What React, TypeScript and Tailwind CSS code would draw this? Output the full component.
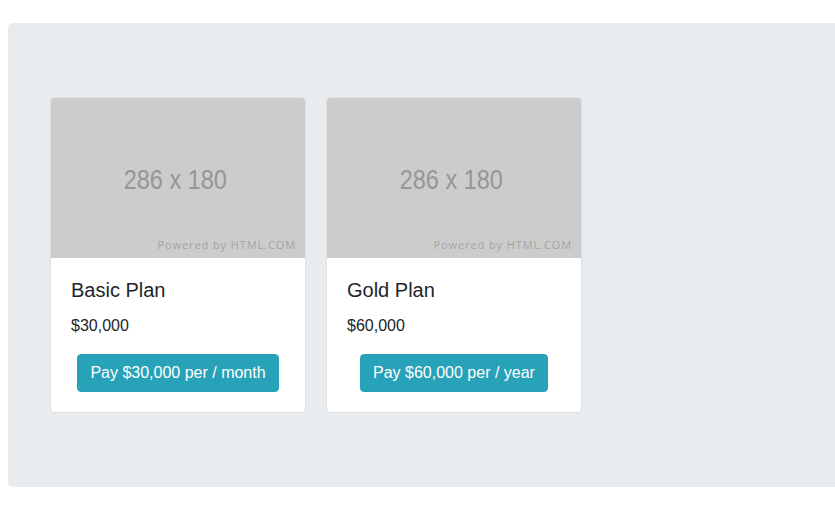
import type { ReactElement } from 'react';

type Plan = { name: string; price: string; cta: string };

const plans: Plan[] = [
  { name: 'Basic Plan', price: '$30,000', cta: 'Pay $30,000 per / month' },
  { name: 'Gold Plan', price: '$60,000', cta: 'Pay $60,000 per / year' },
];

function Placeholder(): ReactElement {
  return (
    <div className="relative flex h-[160px] items-center justify-center rounded-t-[3px] bg-[#cccccc]">
      <span className="translate-x-[-3px] translate-y-[2px] font-['Liberation_Sans',Arial,sans-serif] text-[27px] leading-none text-[#969696] [transform:scaleX(0.87)]">
        286 x 180
      </span>
      <span className="absolute right-[9px] bottom-[8px] font-['Open_Sans',sans-serif] text-[11px] leading-none tracking-[0.9px] text-[#a4a4a4]">
        Powered by HTML.COM
      </span>
    </div>
  );
}

function PlanCard({ plan }: { plan: Plan }): ReactElement {
  return (
    <div className="flex w-[256px] flex-col rounded-[4px] border border-[#dfdfdf] bg-white">
      <Placeholder />
      <div className="p-5">
        <h5 className="mb-3 text-[20px] leading-[24px] font-normal">{plan.name}</h5>
        <p className="mb-4 text-[16px] leading-[24px]">{plan.price}</p>
        <div className="text-center">
          <button className="rounded-[4px] border border-[#28a2b8] bg-[#28a2b8] px-3 py-[6px] text-[16px] leading-[24px] text-white">
            {plan.cta}
          </button>
        </div>
      </div>
    </div>
  );
}

export default function App(): ReactElement {
  return (
    <div className="h-[513px] w-[835px] overflow-hidden bg-white pt-[23px] pl-2 font-['Liberation_Sans',Arial,sans-serif] text-[#212529]">
      <div className="flex h-[464px] w-[900px] gap-[20px] rounded-[5px] bg-[#e9ecef] pt-[74px] pl-[42px]">
        {plans.map((plan) => (
          <div key={plan.name} className="self-start">
            <PlanCard plan={plan} />
          </div>
        ))}
      </div>
    </div>
  );
}
